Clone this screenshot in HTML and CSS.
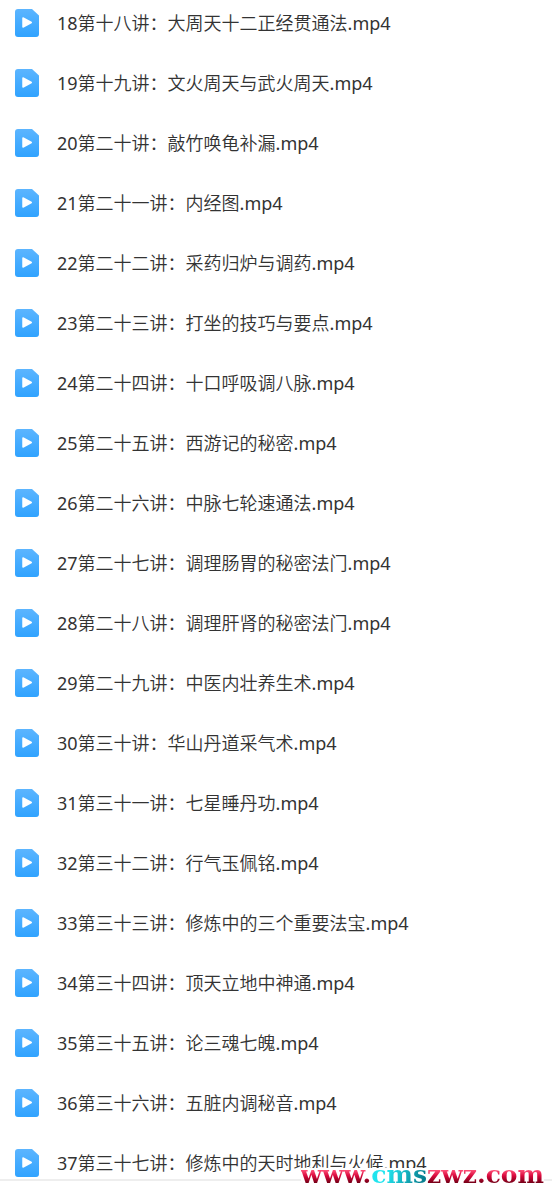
FILE: index.html
```
<!DOCTYPE html>
<html lang="zh-CN">
<head>
<meta charset="utf-8">
<meta name="viewport" content="width=device-width, initial-scale=1">
<title>文件列表</title>
<link rel="stylesheet" href="styles.css">
</head>
<body>
<svg class="defs" aria-hidden="true">
  <linearGradient id="sheet" x1="0" y1="0" x2="0" y2="1"><stop offset="0" stop-color="#5cb5ff"/><stop offset="1" stop-color="#30a3ff"/></linearGradient>
  <symbol id="video" viewBox="0 0 24 28">
    <path fill="url(#sheet)" d="M3 0H17L24 6.500V25Q24 28 21 28H3Q0 28 0 25V3Q0 0 3 0Z"/>
    <path fill="#fff" stroke="#fff" stroke-width="1.500" stroke-linejoin="round" d="M8 9L16.300 13.500L8 18Z"/>
  </symbol>
</svg>
<main class="panel">
<ul class="files">
<li class="file"><svg class="icon"><use href="#video"/></svg><span class="name">18第十八讲：大周天十二正经贯通法.mp4</span></li>
<li class="file"><svg class="icon"><use href="#video"/></svg><span class="name">19第十九讲：文火周天与武火周天.mp4</span></li>
<li class="file"><svg class="icon"><use href="#video"/></svg><span class="name">20第二十讲：敲竹唤龟补漏.mp4</span></li>
<li class="file"><svg class="icon"><use href="#video"/></svg><span class="name">21第二十一讲：内经图.mp4</span></li>
<li class="file"><svg class="icon"><use href="#video"/></svg><span class="name">22第二十二讲：采药归炉与调药.mp4</span></li>
<li class="file"><svg class="icon"><use href="#video"/></svg><span class="name">23第二十三讲：打坐的技巧与要点.mp4</span></li>
<li class="file"><svg class="icon"><use href="#video"/></svg><span class="name">24第二十四讲：十口呼吸调八脉.mp4</span></li>
<li class="file"><svg class="icon"><use href="#video"/></svg><span class="name">25第二十五讲：西游记的秘密.mp4</span></li>
<li class="file"><svg class="icon"><use href="#video"/></svg><span class="name">26第二十六讲：中脉七轮速通法.mp4</span></li>
<li class="file"><svg class="icon"><use href="#video"/></svg><span class="name">27第二十七讲：调理肠胃的秘密法门.mp4</span></li>
<li class="file"><svg class="icon"><use href="#video"/></svg><span class="name">28第二十八讲：调理肝肾的秘密法门.mp4</span></li>
<li class="file"><svg class="icon"><use href="#video"/></svg><span class="name">29第二十九讲：中医内壮养生术.mp4</span></li>
<li class="file"><svg class="icon"><use href="#video"/></svg><span class="name">30第三十讲：华山丹道采气术.mp4</span></li>
<li class="file"><svg class="icon"><use href="#video"/></svg><span class="name">31第三十一讲：七星睡丹功.mp4</span></li>
<li class="file"><svg class="icon"><use href="#video"/></svg><span class="name">32第三十二讲：行气玉佩铭.mp4</span></li>
<li class="file"><svg class="icon"><use href="#video"/></svg><span class="name">33第三十三讲：修炼中的三个重要法宝.mp4</span></li>
<li class="file"><svg class="icon"><use href="#video"/></svg><span class="name">34第三十四讲：顶天立地中神通.mp4</span></li>
<li class="file"><svg class="icon"><use href="#video"/></svg><span class="name">35第三十五讲：论三魂七魄.mp4</span></li>
<li class="file"><svg class="icon"><use href="#video"/></svg><span class="name">36第三十六讲：五脏内调秘音.mp4</span></li>
<li class="file"><svg class="icon"><use href="#video"/></svg><span class="name">37第三十七讲：修炼中的天时地利与火候.mp4</span></li>
</ul>
<div class="mark"><span class="red">www.</span><span class="cyan">cms</span><span class="red">zwz.com</span></div>
</main>
</body>
</html>
```
FILE: styles.css
```
body {
  margin: 0;
  background: #fff;
  color: #333;
  font: 18px/28px "Noto Sans", "Noto Sans CJK SC DemiLight", "Noto Sans CJK SC", sans-serif;
}
.defs {
  position: absolute;
  width: 0;
  height: 0;
}
.panel {
  position: relative;
  padding-bottom: 12px;
}
.files {
  display: flex;
  flex-direction: column;
  gap: 32px;
  margin: 0;
  padding: 9px 15px 2px;
  border-bottom: 2px solid #eee;
  list-style: none;
}
.file {
  display: flex;
  align-items: center;
  gap: 18px;
  height: 28px;
}
.icon {
  flex: none;
  width: 24px;
  height: 28px;
}
.name {
  white-space: nowrap;
}
.mark {
  position: absolute;
  right: 8px;
  bottom: 8px;
  display: flex;
  align-items: flex-end;
  height: 17px;
  background: #fff;
  font: bold 25px/20px "DejaVu Serif", serif;
  white-space: nowrap;
}
.red,
.cyan {
  background: linear-gradient(#ff5078 25%, #d8083c 55%, #780018 88%);
  -webkit-background-clip: text;
  background-clip: text;
  color: transparent;
}
.cyan {
  background-image: linear-gradient(110deg, #20e4ee 30%, #087f90 90%);
}
```
